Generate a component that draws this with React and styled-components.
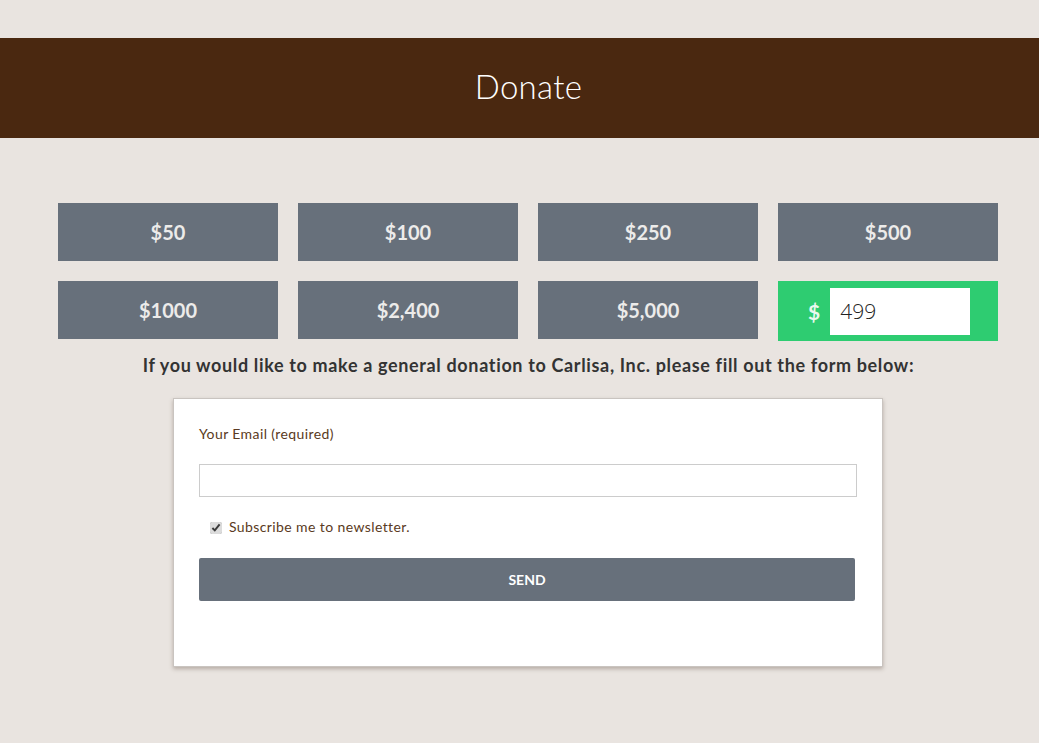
import React, { useState } from 'react';
import styled, { createGlobalStyle } from 'styled-components';

const GlobalStyle = createGlobalStyle`
	html, body {
		margin: 0;
		padding: 0;
		background: #e9e4e0;
		font-family: Lato, "Open Sans", sans-serif;
	}
`;

const Page = styled.div`
	min-height: 743px;
	padding-top: 38px;
	box-sizing: border-box;
`;

const Header = styled.header`
	height: 100px;
	background: #4a2810;
	display: flex;
	align-items: center;
	justify-content: center;
`;

const Title = styled.h1`
	margin: 0 0 4px 18px;
	font-size: 33px;
	font-weight: 300;
	color: #ffffff;
	letter-spacing: 0.3px;
`;

const Amounts = styled.div`
	display: grid;
	grid-template-columns: repeat(4, 220px);
	gap: 20px;
	margin: 65px 0 0 58px;
`;

const AmountButton = styled.button`
	height: 58px;
	border: none;
	background: #67707b;
	color: #ecebea;
	font-family: Lato, sans-serif;
	font-weight: 700;
	font-size: 20px;
	cursor: pointer;
`;

const Custom = styled.label`
	height: 60px;
	background: #2ecc71;
	display: flex;
	align-items: center;
	padding: 0 29px 0 30px;
	gap: 10px;
	box-sizing: border-box;
`;

const Dollar = styled.span`
	color: #e9f8ee;
	font-weight: 700;
	font-size: 21px;
`;

const CustomInput = styled.input`
	width: 140px;
	height: 47px;
	border: none;
	outline: none;
	box-sizing: border-box;
	padding: 0 10px;
	font-family: "Open Sans", sans-serif;
	font-weight: 300;
	font-size: 21px;
	color: #222;
`;

const Intro = styled.p`
	margin: 13px 0 0;
	text-align: center;
	font-size: 18px;
	font-weight: 700;
	color: #333;
	padding-left: 18px;
	letter-spacing: 0.65px;
`;

const FormCard = styled.form`
	width: 710px;
	height: 269px;
	box-sizing: border-box;
	margin: 22px 0 0 173px;
	background: #fff;
	border: 1px solid #c9c4c0;
	box-shadow: 0 2px 4px rgba(90, 70, 55, 0.35);
	padding: 25px 25px 0 25px;
`;

const Label = styled.div`
	font-size: 14px;
	color: #5a3a22;
	line-height: 20px;
	letter-spacing: 0.4px;
`;

const EmailInput = styled.input`
	display: block;
	width: 658px;
	height: 33px;
	box-sizing: border-box;
	margin-top: 20px;
	border: 1px solid #cccccc;
	outline: none;
`;

const CheckRow = styled.label`
	display: flex;
	align-items: center;
	gap: 7px;
	margin: 21px 0 0 11px;
	font-size: 14px;
	color: #5a3a22;
	letter-spacing: 0.4px;
`;

const Check = styled.input`
	width: 12px;
	height: 12px;
	margin: 2px 0 0 0;
	accent-color: #dcdcdc;
`;

const SendButton = styled.button`
	display: block;
	width: 656px;
	height: 43px;
	margin-top: 23px;
	border: none;
	border-radius: 2px;
	background: #67707b;
	color: #fff;
	font-family: Lato, sans-serif;
	font-weight: 700;
	font-size: 14px;
	text-transform: uppercase;
`;

const AMOUNTS = ['$50', '$100', '$250', '$500', '$1000', '$2,400', '$5,000'];

export default function App() {
	const [amount, setAmount] = useState('499');

	return (
		<Page>
			<GlobalStyle />
			<Header>
				<Title>Donate</Title>
			</Header>
			<Amounts>
				{AMOUNTS.map((a) => (
					<AmountButton key={a}>{a}</AmountButton>
				))}
				<Custom>
					<Dollar>$</Dollar>
					<CustomInput value={amount} onChange={(e) => setAmount(e.target.value)} />
				</Custom>
			</Amounts>
			<Intro>If you would like to make a general donation to Carlisa, Inc. please fill out the form below:</Intro>
			<FormCard onSubmit={(e) => e.preventDefault()}>
				<Label>Your Email (required)</Label>
				<EmailInput type="email" />
				<CheckRow>
					<Check type="checkbox" defaultChecked />
					Subscribe me to newsletter.
				</CheckRow>
				<SendButton>Send</SendButton>
			</FormCard>
		</Page>
	);
}
